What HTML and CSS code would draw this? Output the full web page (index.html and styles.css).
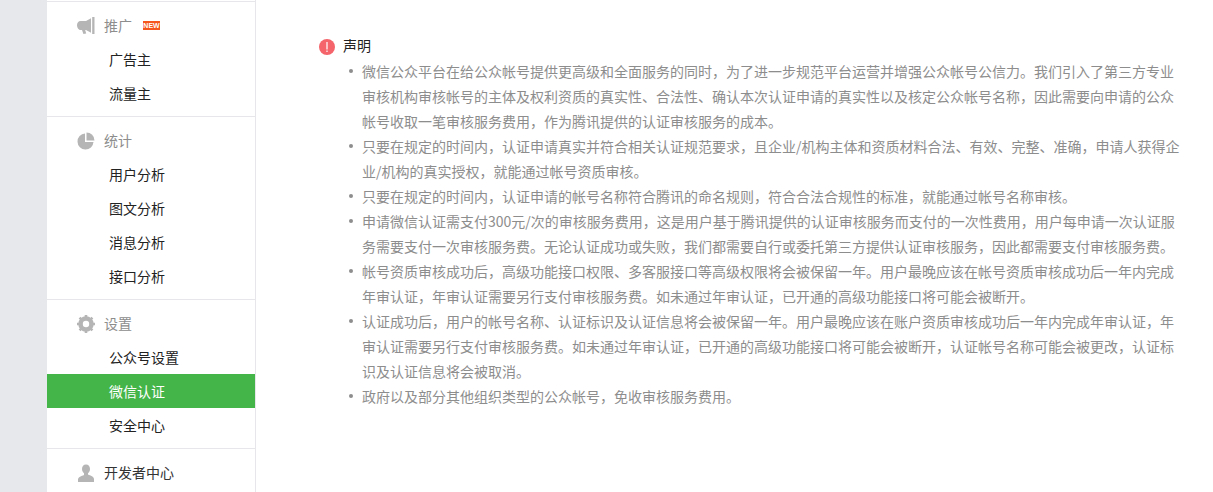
FILE: index.html
```html
<!DOCTYPE html>
<html lang="zh-CN">
<head>
<meta charset="utf-8">
<title>微信认证</title>
<link rel="stylesheet" href="styles.css">
</head>
<body>
<div class="page">
  <div class="gutter"></div>
  <nav class="sidebar">
    <section class="group">
      <div class="group-head">
        <svg class="icon" viewBox="0 0 18 18"><path d="M0 8C0 5.700 1.500 4 3.500 4H9L14 1.200V15.800L9 13H8.200L9.200 16.500 6.400 17 5 13H3.500C1.500 13 0 10.500 0 8z" fill="#b5b5b5"/><path d="M15.200 0H17.500V17H15.200z" fill="#b5b5b5"/></svg>
        <span class="group-title">推广</span>
        <span class="badge">NEW</span>
      </div>
      <a class="item">广告主</a>
      <a class="item">流量主</a>
    </section>
    <section class="group">
      <div class="group-head">
        <svg class="icon" viewBox="0 0 18 18"><path d="M8 1.500A8 8 0 1 0 16.500 10H8z" fill="#b5b5b5"/><path d="M9.500 0.500A8 8 0 0 1 17.500 8.500H9.500z" fill="#b5b5b5"/></svg>
        <span class="group-title">统计</span>
      </div>
      <a class="item">用户分析</a>
      <a class="item">图文分析</a>
      <a class="item">消息分析</a>
      <a class="item">接口分析</a>
    </section>
    <section class="group">
      <div class="group-head">
        <svg class="icon" viewBox="0 0 18 18"><circle cx="9" cy="9" r="5.500" fill="none" stroke="#b5b5b5" stroke-width="4.500"/><path d="M9 0v18M0 9h18M2.600 2.600l12.800 12.800M15.400 2.600L2.600 15.400" stroke="#b5b5b5" stroke-width="2.600"/><circle cx="9" cy="9" r="3.200" fill="#fff"/></svg>
        <span class="group-title">设置</span>
      </div>
      <a class="item">公众号设置</a>
      <a class="item active">微信认证</a>
      <a class="item">安全中心</a>
    </section>
    <section class="group">
      <div class="group-head">
        <svg class="icon" viewBox="0 0 18 18"><path d="M9 0.500c2.500 0 4 2 4 4.500 0 2-1 3.500-2 4.300v1.200c2.500 1 6 2 6 4.500V18H1v-2.500c0-2.500 3.500-3.500 6-4.500V9.300C6 8.500 5 7 5 5c0-2.500 1.500-4.500 4-4.500z" fill="#b5b5b5"/></svg>
        <span class="group-title dark">开发者中心</span>
      </div>
    </section>
  </nav>
  <main class="main">
    <h2 class="notice-head">
      <svg class="alert" viewBox="0 0 16 16"><circle cx="8" cy="8" r="8" fill="#f4646a"/><rect x="7.400" y="3" width="1.200" height="7.500" fill="#fff"/><rect x="7.400" y="11.500" width="1.200" height="1.500" fill="#fff"/></svg>
      <span class="notice-title">声明</span>
    </h2>
    <ul class="notice-list">
      <li>微信公众平台在给公众帐号提供更高级和全面服务的同时，为了进一步规范平台运营并增强公众帐号公信力。我们引入了第三方专业审核机构审核帐号的主体及权利资质的真实性、合法性、确认本次认证申请的真实性以及核定公众帐号名称，因此需要向申请的公众帐号收取一笔审核服务费用，作为腾讯提供的认证审核服务的成本。</li>
      <li>只要在规定的时间内，认证申请真实并符合相关认证规范要求，且企业/机构主体和资质材料合法、有效、完整、准确，申请人获得企业/机构的真实授权，就能通过帐号资质审核。</li>
      <li>只要在规定的时间内，认证申请的帐号名称符合腾讯的命名规则，符合合法合规性的标准，就能通过帐号名称审核。</li>
      <li>申请微信认证需支付300元/次的审核服务费用，这是用户基于腾讯提供的认证审核服务而支付的一次性费用，用户每申请一次认证服务需要支付一次审核服务费。无论认证成功或失败，我们都需要自行或委托第三方提供认证审核服务，因此都需要支付审核服务费。</li>
      <li>帐号资质审核成功后，高级功能接口权限、多客服接口等高级权限将会被保留一年。用户最晚应该在帐号资质审核成功后一年内完成年审认证，年审认证需要另行支付审核服务费。如未通过年审认证，已开通的高级功能接口将可能会被断开。</li>
      <li>认证成功后，用户的帐号名称、认证标识及认证信息将会被保留一年。用户最晚应该在账户资质审核成功后一年内完成年审认证，年审认证需要另行支付审核服务费。如未通过年审认证，已开通的高级功能接口将可能会被断开，认证帐号名称可能会被更改，认证标识及认证信息将会被取消。</li>
      <li>政府以及部分其他组织类型的公众帐号，免收审核服务费用。</li>
    </ul>
  </main>
</div>
</body>
</html>
```
FILE: styles.css
```css
* { box-sizing: border-box; }
html, body { margin: 0; padding: 0; height: 100%; overflow: hidden; background: #fff; }
body { font-family: "Noto Sans CJK SC", "Liberation Sans", sans-serif; font-size: 14px; color: #222; }
.page { display: flex; height: 492px; }
.gutter { width: 47px; flex: none; background: #e7e8eb; }
.sidebar { width: 209px; flex: none; padding-top: 1px; border-right: 1px solid #e7e7eb; background: #fff; }
.group { border-top: 1px solid #e7e7eb; padding-bottom: 6px; }
.group-head { display: flex; align-items: center; height: 40px; padding: 8px 0 0 30px; }
.icon { width: 18px; height: 18px; flex: none; }
.group-title { margin: 0 0 2px 9px; line-height: 32px; color: #8d8d8d; }
.group-title.dark { color: #333; }
.badge { margin: 0 0 1px 11px; width: 17px; height: 9px; background: #f4561d; color: #fff; font: bold 7px/9px "Liberation Sans", sans-serif; text-align: center; overflow: hidden; }
.item { display: block; height: 34px; line-height: 35px; padding-left: 62px; color: #222; }
.item.active { background: #44b549; color: #fff; }
.main { flex: 1; min-width: 0; padding: 34px 31px 0 63px; }
.notice-head { display: flex; align-items: center; margin: 0; height: 25px; font-size: 14px; font-weight: 400; line-height: 25px; color: #222; }
.notice-title { margin-bottom: 2px; }
.alert { width: 16px; height: 16px; flex: none; margin-right: 8px; }
.notice-list { list-style: none; margin: 0; padding: 0 0 0 30px; color: #8d8d8d; line-height: 25px; }
.notice-list li { display: flex; }
.notice-list li::before { content: ""; flex: none; width: 4px; height: 4px; margin: 10px 9px 0 0; border-radius: 50%; background: #8d8d8d; }
```
